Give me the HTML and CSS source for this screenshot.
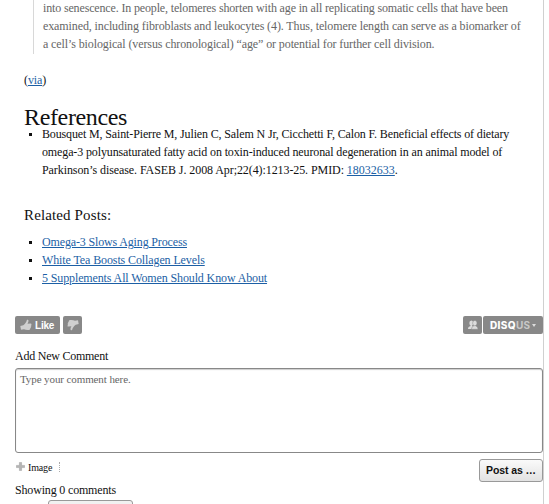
FILE: index.html
```
<!DOCTYPE html>
<html lang="en">
<head>
<meta charset="utf-8">
<title>References</title>
<link rel="stylesheet" href="styles.css">
</head>
<body>
<main class="page">
  <article class="post">
    <blockquote class="quote"><span class="t15">into senescence. In people, telomeres shorten with age in all replicating somatic cells that have been</span><br><span class="t11">examined, including fibroblasts and leukocytes (4). Thus, telomere length can serve as a biomarker of</span><br><span class="t11">a cell’s biological (versus chronological) “age” or potential for further cell division.</span></blockquote>
    <p class="via">(<a href="#">via</a>)</p>
    <h2 class="title">References</h2>
    <ul class="list">
      <li><span class="t14">Bousquet M, Saint-Pierre M, Julien C, Salem N Jr, Cicchetti F, Calon F. Beneficial effects of dietary</span><br><span class="t13">omega-3 polyunsaturated fatty acid on toxin-induced neuronal degeneration in an animal model of</span><br><span class="t8">Parkinson’s disease. FASEB J. 2008 Apr;22(4):1213-25. PMID: </span><a href="#">18032633</a>.</li>
    </ul>
    <h3 class="related">Related Posts:</h3>
    <ul class="list">
      <li><a class="t15" href="#">Omega-3 Slows Aging Process</a></li>
      <li><a class="t11" href="#">White Tea Boosts Collagen Levels</a></li>
      <li><a class="t12" href="#">5 Supplements All Women Should Know About</a></li>
    </ul>
  </article>
  <section class="thread">
    <div class="bar">
      <div class="chip like">
        <svg width="12" height="12" viewBox="0 0 12 12"><path fill="#cfcfcf" d="M.3 7 3.3 6.2C5 5 6.3 3.3 6.8 1.2 7 .4 8.5.6 8.5 1.8 8.5 3 8 3.9 7.5 4.7L10.6 4.4C11.8 4.5 11.8 5.8 11 6.1 11.6 6.7 11.4 7.6 10.7 7.9 11.1 8.6 10.8 9.3 10.1 9.5 10.3 10.3 9.8 10.8 9 10.9 7 11.1 5.4 10.9 4 10.3L1 10.8z"/></svg>
        <span>Like</span>
      </div>
      <div class="chip dislike">
        <svg width="12" height="12" viewBox="0 0 12 12"><path fill="#cfcfcf" d="M11.7 5 8.7 5.8C7 7 5.7 8.7 5.2 10.8 5 11.6 3.5 11.4 3.5 10.2 3.5 9 4 8.1 4.5 7.3L1.4 7.6C.2 7.5.2 6.2 1 5.9.4 5.3.6 4.4 1.3 4.1.9 3.4 1.2 2.7 1.9 2.5 1.7 1.7 2.2 1.2 3 1.1 5 .9 6.6 1.1 8 1.7L11 1.2z"/></svg>
      </div>
      <div class="chip people">
        <svg width="10" height="10" viewBox="0 0 10 10"><g fill="#dcdcdc"><ellipse cx="3.4" cy="3" rx="2.1" ry="2.6"/><path d="M0 9C.1 7.2 1 6.5 2.5 6V5h1.6v1L5 6.7V9z"/></g><g fill="#dcdcdc" stroke="#888" stroke-width=".5"><path d="M3.5 9.3C3.6 7.3 4.4 6.5 5.7 6V5h2v1C9.2 6.5 9.9 7.3 10 9.3z"/><ellipse cx="6.8" cy="3.1" rx="2.2" ry="2.7"/></g></svg>
      </div>
      <div class="chip brand"><span>DISQ<i>US</i></span><b class="caret"></b></div>
    </div>
    <h4 class="label">Add New Comment</h4>
    <div class="box">Type your comment here.</div>
    <div class="tools">
      <div class="attach">
        <svg width="9" height="9" viewBox="0 0 9 9"><path fill="#b5b5b5" stroke="#8d8d8d" stroke-width=".4" d="M3.4.4h2.2v3h3v2.2h-3v3H3.4v-3h-3V3.4h3z"/></svg>
        <span>Image</span>
      </div>
      <div class="submit">Post as …</div>
    </div>
    <h4 class="count">Showing 0 comments</h4>
    <div class="sort"></div>
  </section>
</main>
</body>
</html>
```
FILE: styles.css
```
* { box-sizing: border-box; margin: 0; padding: 0; }
html, body { height: 504px; overflow: hidden; background: #fff; }
body { font: 12px/18px "Liberation Serif", "Times New Roman", serif; color: #111; }
a { color: #1c5fa5; text-decoration: underline; }
.t15 { letter-spacing: -.15px; }
.t14 { letter-spacing: -.14px; }
.t13 { letter-spacing: -.13px; }
.t12 { letter-spacing: -.125px; }
.t11 { letter-spacing: -.11px; }
.t8 { letter-spacing: -.083px; }
.page { width: 544px; height: 504px; border-right: 1px solid #d0d0d0; overflow: hidden; }
.post { height: 316px; padding-left: 24px; white-space: nowrap; overflow: hidden; }
.quote { margin: -1px 0 0 9px; padding-left: 9px; border-left: 1px solid #d8d8d8; color: #666; height: 55px; }
.via { margin-top: 17px; letter-spacing: -.1px; }
.title { font-size: 24px; line-height: 18px; font-weight: 400; margin-top: 19px; height: 17px; letter-spacing: -.35px; }
.list { list-style: none; padding-left: 18px; }
.list li::before { content: ""; float: left; width: 3px; height: 3px; margin: 8px 0 0 -13px; background: #111; }
.related { font-size: 15px; line-height: 18px; font-weight: 400; margin: 27px 0 9px; letter-spacing: .13px; }
.thread { padding-left: 15px; }
.bar { display: flex; height: 18px; }
.chip { display: flex; align-items: center; height: 18px; background: #888; border-radius: 2px; color: #fff; font: bold 10px/18px "Liberation Sans", Arial, sans-serif; }
.like { width: 45px; padding-left: 5px; gap: 3px; margin-right: 3px; }
.like span { position: relative; top: 1px; letter-spacing: -.2px; }
.dislike { width: 19px; justify-content: center; }
.people { width: 19px; justify-content: center; margin-left: auto; margin-right: 1px; }
.brand { width: 60px; padding-left: 7px; gap: 2px; font-family: Inter, sans-serif; font-weight: 800; letter-spacing: .35px; }
.brand i { font-style: normal; font-weight: 700; color: #c8c8c8; }
.caret { border: 2.5px solid transparent; border-top: 3px solid #ddd; border-bottom: 0; }
.label, .count { font-size: 12px; line-height: 18px; font-weight: 400; }
.label { margin: 13px 0 3px; letter-spacing: -.24px; }
.box { height: 85px; border: 1px solid #888; border-radius: 3px; padding: 1px 4px; font-size: 11px; color: #666; letter-spacing: -.1px; box-shadow: inset 0 1px 1px #ccc; }
.tools { display: flex; justify-content: space-between; height: 28px; padding-top: 6px; }
.attach { display: flex; align-items: center; gap: 3px; width: 45px; height: 10px; margin-top: 3px; padding-left: 1px; font-size: 10px; letter-spacing: -.15px; border-right: 1px dotted #aaa; }
.attach svg { position: relative; top: -1px; }
.attach span { position: relative; top: 1px; }
.submit { width: 64px; height: 23px; border: 1px solid #999; border-radius: 3px; background: linear-gradient(#fafafa, #e2e2e2); font: bold 10.5px/21px "Liberation Sans", Arial, sans-serif; text-align: center; letter-spacing: -.1px; }
.count { letter-spacing: -.17px; }
.sort { width: 85px; height: 20px; margin: 1px 0 0 33px; border: 1px solid #999; border-radius: 3px; background: #f1f1f1; }
```
